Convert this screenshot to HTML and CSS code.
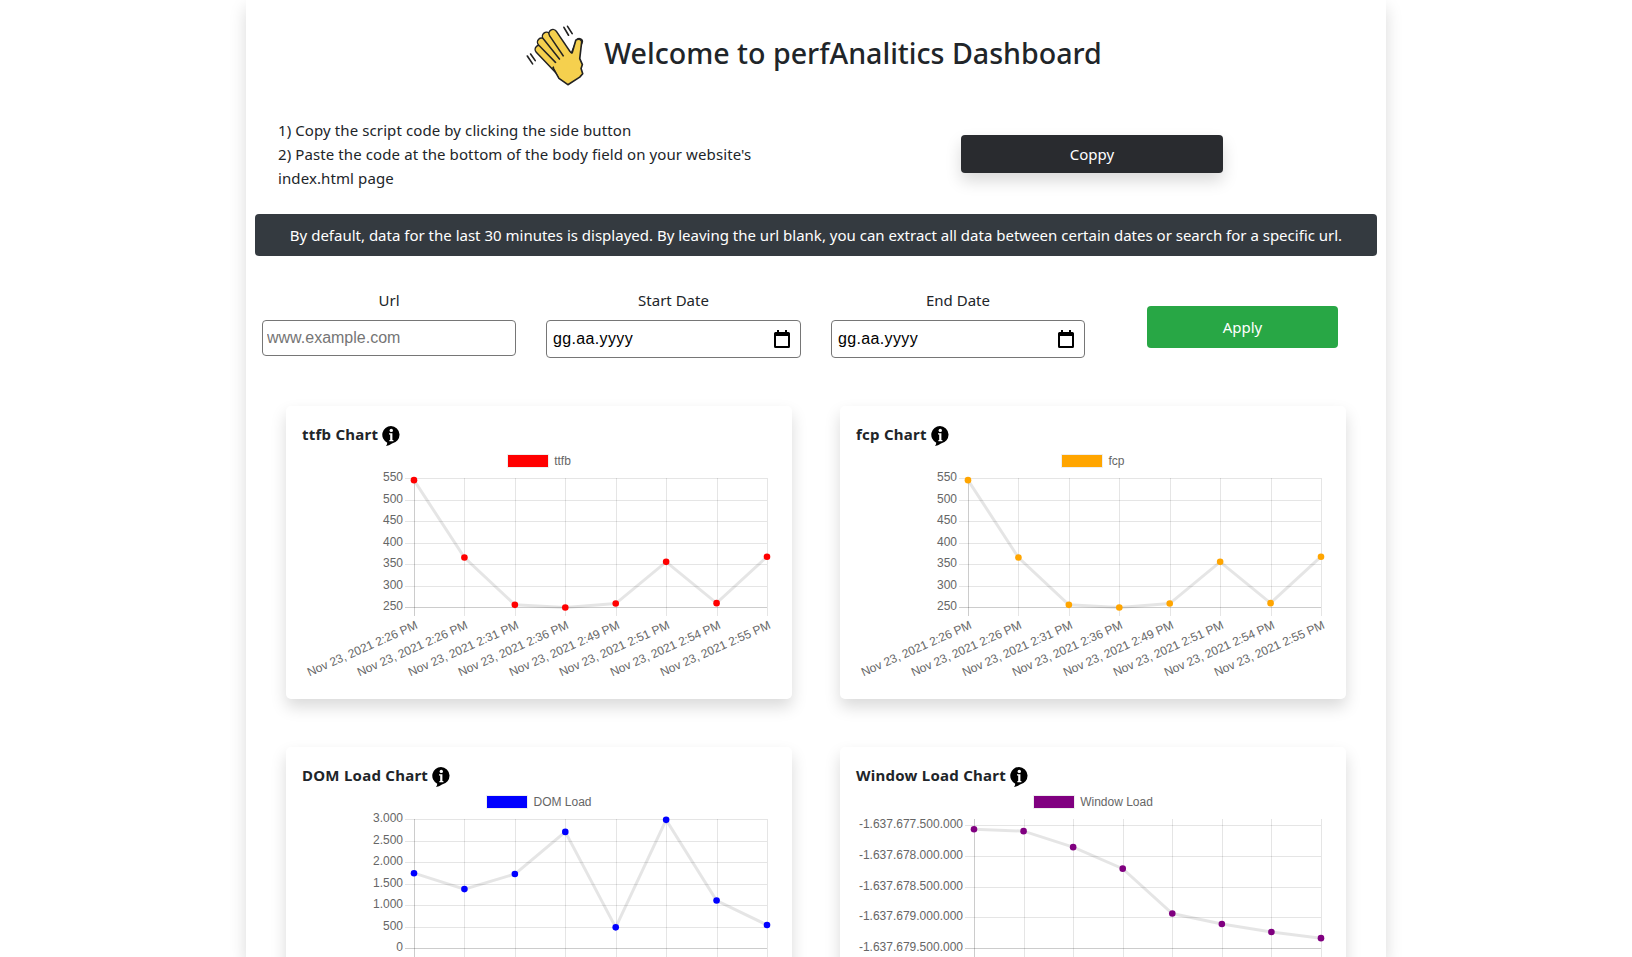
FILE: index.html
```html
<!DOCTYPE html>
<html lang="en">
<head>
<title>perfAnalitics Dashboard</title>
<link rel="stylesheet" href="styles.css">
</head>
<body>
<div class="page">
    <header class="welcome">
        <svg class="hand" viewBox="25 28 185 185">
            <g fill="none" stroke="#222" stroke-width="5" stroke-linecap="round">
                <path d="M29 122l16 24M39 116l14 20M140 35l14 24M151 32l14 22"/>
            </g>
            <g fill="none" stroke-linecap="round">
                <path d="M125 165L65 102" stroke="#222" stroke-width="29"/>
                <path d="M125 165L65 102" stroke="#f5d04e" stroke-width="20"/>
                <path d="M135 145L72 80" stroke="#222" stroke-width="29"/>
                <path d="M135 145L72 80" stroke="#f5d04e" stroke-width="20"/>
                <path d="M145 135L87 62" stroke="#222" stroke-width="29"/>
                <path d="M145 135L87 62" stroke="#f5d04e" stroke-width="20"/>
                <path d="M155 125L107 54" stroke="#222" stroke-width="29"/>
                <path d="M155 125L107 54" stroke="#f5d04e" stroke-width="20"/>
                <path d="M165 130L187 78" stroke="#222" stroke-width="22"/>
            </g>
            <path d="M107 157L155 118L165 112L176 74Q188 66 194 78L188 130L196 148L192 160L197 176L188 186L152 209L125 190Z" fill="#f5d04e" stroke="#222" stroke-width="5" stroke-linejoin="round"/>
            <path d="M107 150L155 110L170 120L128 188Z" fill="#f5d04e"/>
        </svg>
        <h1>Welcome to perfAnalitics Dashboard</h1>
    </header>

    <section class="intro">
        <p class="steps">1) Copy the script code by clicking the side button<br>2) Paste the code at the bottom of the body field on your website's<br>index.html page</p>
        <button type="button" class="copy-btn">Coppy</button>
    </section>

    <div class="notice">By default, data for the last 30 minutes is displayed. By leaving the url blank, you can extract all data between certain dates or search for a specific url.</div>

    <form class="filters">
        <div class="field">
            <label for="url">Url</label>
            <input type="text" id="url" class="url-input" placeholder="www.example.com">
        </div>
        <div class="field">
            <label for="startDate">Start Date</label>
            <div class="date-box">
                <input type="text" id="startDate" class="date-input" value="gg.aa.yyyy">
                <svg class="calendar" viewBox="0 0 16 18"><path d="M3 0h2v2h6V0h2v2h1.500A1.500 1.500 0 0 1 16 3.500v13a1.500 1.500 0 0 1-1.500 1.500h-13A1.500 1.500 0 0 1 0 16.500v-13A1.500 1.500 0 0 1 1.500 2H3zM2 6v10h12V6z"/></svg>
            </div>
        </div>
        <div class="field">
            <label for="endDate">End Date</label>
            <div class="date-box">
                <input type="text" id="endDate" class="date-input" value="gg.aa.yyyy">
                <svg class="calendar" viewBox="0 0 16 18"><path d="M3 0h2v2h6V0h2v2h1.500A1.500 1.500 0 0 1 16 3.500v13a1.500 1.500 0 0 1-1.500 1.500h-13A1.500 1.500 0 0 1 0 16.500v-13A1.500 1.500 0 0 1 1.500 2H3zM2 6v10h12V6z"/></svg>
            </div>
        </div>
        <button type="button" class="apply-btn">Apply</button>
    </form>

    <main class="charts" id="charts"></main>
</div>
<script src="charts.js"></script>
</body>
</html>
```

FILE: styles.css
```css
* {
    box-sizing: border-box;
}

body {
    font-family: "Noto Sans", "Open Sans", sans-serif;
    font-size: 15px;
    color: #212529;
    background-color: #fff;
    margin: 0;
}

.page {
    width: 1140px;
    height: 957px;
    margin-left: 246px;
    overflow: hidden;
    background-color: #fff;
    box-shadow: 0 8px 16px rgba(0,0,0,0.15);
}

html, body {
    height: 957px;
    overflow: hidden;
}

.welcome {
    display: flex;
    justify-content: center;
    align-items: center;
    gap: 17px;
    height: 108px;
    padding-bottom: 4px;
    padding-right: 4px;
}

.hand {
    width: 61px;
    height: 61px;
    margin-top: 6px;
}

h1 {
    font-size: 28.6px;
    font-weight: 500;
    margin: 0;
}

.intro {
    display: flex;
    height: 106px;
    padding: 10px 0 0 32px;
}

.steps {
    width: 500px;
    margin: 0;
    line-height: 24px;
    letter-spacing: 0.1px;
}

.copy-btn {
    width: 262px;
    height: 38px;
    margin: 17px 0 0 183px;
    font: inherit;
    color: #fff;
    background-color: #292b2f;
    border: none;
    border-radius: 4px;
    box-shadow: 0 8px 16px rgba(0,0,0,0.15);
}

.notice {
    height: 42px;
    margin: 0 9px;
    line-height: 42px;
    text-align: center;
    color: #fff;
    background-color: #343a40;
    border-radius: 4px;
}

.filters {
    display: grid;
    grid-template-columns: 254px 255px 254px 191px;
    column-gap: 30px;
    padding: 32px 0 0 16px;
}

.field {
    display: flex;
    flex-direction: column;
    gap: 8px;
    text-align: center;
}

.field label {
    line-height: 24px;
}

.url-input {
    height: 36px;
    width: 100%;
    padding: 0 4px;
    font-family: "Liberation Sans", Arial, sans-serif;
    font-size: 16px;
    border: 1px solid #767676;
    border-radius: 4px;
}

.url-input::placeholder {
    color: #757575;
}

.date-box {
    position: relative;
}

.date-input {
    display: block;
    width: 100%;
    height: 38px;
    padding: 0 6px;
    font-family: "Liberation Sans", Arial, sans-serif;
    font-size: 16px;
    letter-spacing: 0.35px;
    color: #000;
    border: 1px solid #767676;
    border-radius: 4px;
}

.calendar {
    position: absolute;
    top: 10px;
    right: 11px;
    width: 16px;
    height: 18px;
}

.apply-btn {
    align-self: start;
    height: 42px;
    margin-top: 18px;
    margin-left: 32px;
    width: 191px;
    font: inherit;
    color: #fff;
    background-color: #28a745;
    border: none;
    border-radius: 4px;
}

.charts {
    display: grid;
    grid-template-columns: 506px 506px;
    gap: 48px;
    padding: 48px 0 0 40px;
}

.chart-card {
    height: 293px;
    background-color: #fff;
    border-radius: 5px;
    box-shadow: 0 8px 16px rgba(0,0,0,0.15);
}

.chart-title {
    display: flex;
    align-items: center;
    gap: 4px;
    height: 39px;
    padding: 16px 0 0 16px;
    margin: 0;
    font-size: 15px;
    font-weight: 700;
    letter-spacing: 0.25px;
}

.info {
    width: 18px;
    height: 20px;
    margin-top: 4px;
}

.legend {
    display: flex;
    justify-content: center;
    align-items: center;
    gap: 5px;
    height: 14px;
    margin-top: 9px;
    font-family: "Liberation Sans", Arial, sans-serif;
    font-size: 12px;
    color: #666;
}

.legend-box {
    width: 42px;
    height: 14px;
    border: 1px solid #eee;
}

.plot {
    display: block;
    font-family: "Liberation Sans", Arial, sans-serif;
    font-size: 12px;
}

.plot text {
    fill: #666;
}
```

FILE: charts.js
```js
const times = ['2:26', '2:26', '2:31', '2:36', '2:49', '2:51', '2:54', '2:55'];
const ttfbData = [545, 365, 255, 249, 258, 355, 259, 367];

const charts = [
    {title: 'ttfb Chart', label: 'ttfb', color: 'red', data: ttfbData, ticks: ['550', '500', '450', '400', '350', '300', '250'], min: 250, max: 550, left: 128, right: 481, top: 10, bottom: 139},
    {title: 'fcp Chart', label: 'fcp', color: 'orange', data: ttfbData, ticks: ['550', '500', '450', '400', '350', '300', '250'], min: 250, max: 550, left: 128, right: 481, top: 10, bottom: 139},
    {title: 'DOM Load Chart', label: 'DOM Load', color: 'blue', data: [1740, 1370, 1720, 2700, 480, 2980, 1105, 535], ticks: ['3.000', '2.500', '2.000', '1.500', '1.000', '500', '0'], min: 0, max: 3000, left: 128, right: 481, top: 10, bottom: 139},
    {title: 'Window Load Chart', label: 'Window Load', color: 'purple', data: [-1637677570, -1637677600, -1637677860, -1637678210, -1637678940, -1637679110, -1637679240, -1637679340], ticks: ['-1.637.677.500.000', '-1.637.678.000.000', '-1.637.678.500.000', '-1.637.679.000.000', '-1.637.679.500.000'], min: -1637679500, max: -1637677500, left: 134, right: 481, top: 10, bottom: 139, gridTop: 16}
];

function infoIcon() {
    return '<svg class="info" viewBox="0 0 18 20"><path d="M9 0a8.800 8.800 0 0 1 1 17.500Q7 19.500 4 20q1.300-1.500 1.200-3.300A8.800 8.800 0 0 1 9 0z"/><circle cx="9.300" cy="4.400" r="1.700" fill="#fff"/><path d="M7 7.300h3.400v6.600h1v1.300H7.400v-1.300h.8V8.600H7z" fill="#fff"/></svg>';
}

function drawPlot(chart) {
    const gridTop = chart.gridTop || chart.top;
    const stepX = (chart.right - chart.left) / 7;
    const stepY = (chart.bottom - gridTop) / (chart.ticks.length - 1);
    const scale = (chart.bottom - gridTop) / (chart.max - chart.min);
    let out = '';

    // grid lines and their tick marks
    chart.ticks.forEach((tick, i) => {
        const y = Math.round(gridTop + i * stepY) + 0.5;
        const last = i === chart.ticks.length - 1;
        out += `<line x1="${chart.left - 9}" x2="${chart.right}" y1="${y}" y2="${y}" stroke="rgba(0,0,0,${last ? 0.2 : 0.1})"/>`;
        out += `<text x="${chart.left - 11}" y="${gridTop + i * stepY + 3}" text-anchor="end">${tick}</text>`;
    });
    times.forEach((time, i) => {
        const x = Math.round(chart.left + i * stepX) + 0.5;
        out += `<line x1="${x}" x2="${x}" y1="${chart.top}" y2="${chart.bottom + 9}" stroke="rgba(0,0,0,${i === 0 ? 0.2 : 0.1})"/>`;
        out += `<text transform="translate(${x + 4} ${chart.bottom + 21}) rotate(-24)" text-anchor="end">Nov 23, 2021 ${time} PM</text>`;
    });

    const points = chart.data.map((value, i) => [chart.left + i * stepX, chart.bottom - (value - chart.min) * scale]);
    out += `<polyline points="${points.map(p => p.join(',')).join(' ')}" fill="none" stroke="rgba(0,0,0,0.1)" stroke-width="3"/>`;
    points.forEach(p => {
        out += `<circle cx="${p[0]}" cy="${p[1]}" r="3.300" fill="${chart.color}"/>`;
    });
    return `<svg class="plot" width="506" height="231">${out}</svg>`;
}

const container = document.getElementById('charts');
charts.forEach(chart => {
    const card = document.createElement('div');
    card.className = 'chart-card';
    card.innerHTML = `<h2 class="chart-title">${chart.title} ${infoIcon()}</h2>
        <div class="legend"><span class="legend-box" style="background-color:${chart.color}"></span>${chart.label}</div>
        ${drawPlot(chart)}`;
    container.appendChild(card);
});
```
